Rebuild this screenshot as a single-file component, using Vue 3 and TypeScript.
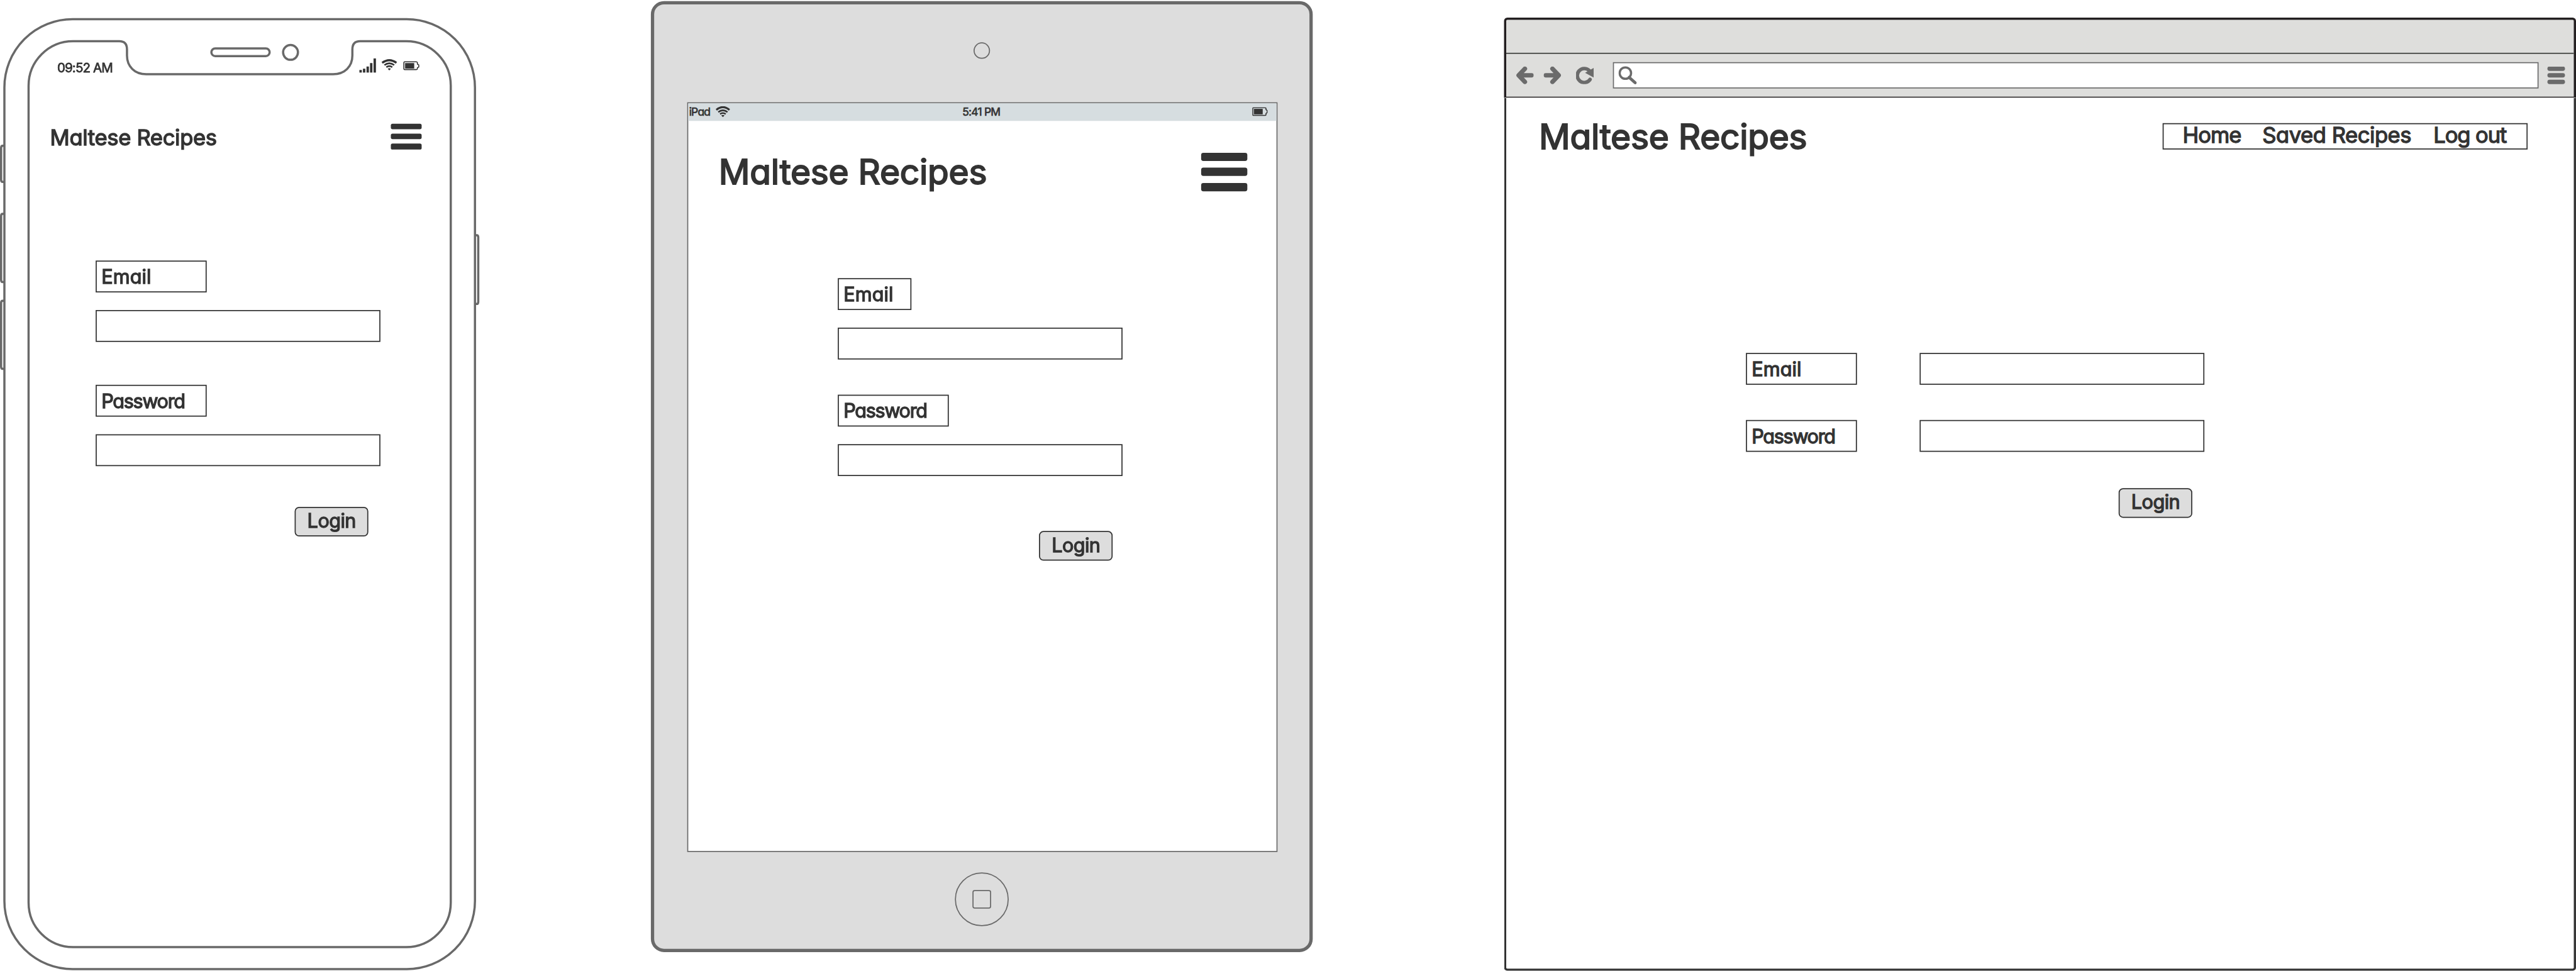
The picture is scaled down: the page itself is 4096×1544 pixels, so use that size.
<script setup lang="ts">
interface Field {
  label: string
  kind: string
}

interface NavLink {
  text: string
  kind: string
}

const brand = 'Maltese Recipes'

const fields: Field[] = [
  { label: 'Email', kind: 'email' },
  { label: 'Password', kind: 'password' },
]

const links: NavLink[] = [
  { text: 'Home', kind: 'home' },
  { text: 'Saved Recipes', kind: 'saved' },
  { text: 'Log out', kind: 'logout' },
]
</script>

<template>
  <div class="viewport">
    <main class="board">
      <!-- Phone -->
      <section class="phone">
        <svg class="phone-frame" viewBox="0 0 874 1766" width="874" height="1766">
          <g fill="#fff" stroke="#696969" stroke-width="4">
            <path d="M8 265H5Q2 265 2 269V327Q2 331 5 331H8" />
            <path d="M8 389H5Q2 389 2 393V509Q2 513 5 513H8" />
            <path d="M8 547H5Q2 547 2 551V667Q2 671 5 671H8" />
            <path d="M864 428H867Q870 428 870 432V549Q870 553 867 553H864" />
            <rect x="8" y="35" width="856" height="1728" rx="124" />
            <path
              d="M133 75H217Q231 75 231 90V101C231 121 245 135 266 135H606C627 135 641 121 641 101V90Q641 75 655 75H739A81 81 0 0 1 820 156V1642A81 81 0 0 1 739 1723H133A81 81 0 0 1 52 1642V156A81 81 0 0 1 133 75Z"
            />
            <rect x="384.5" y="88" width="106" height="14" rx="7" />
            <circle cx="528.5" cy="95.3" r="13.5" />
          </g>
        </svg>
        <div class="phone-screen">
          <div class="phone-status">
            <span class="phone-time">09:52 AM</span>
            <svg class="phone-icons" viewBox="0 0 112 28" width="112" height="28">
              <g fill="#333">
                <rect x="1.8" y="21.3" width="4.4" height="4.7" />
                <rect x="8.2" y="19" width="4.4" height="7" />
                <rect x="14.7" y="15" width="4.4" height="11" />
                <rect x="21.1" y="8.7" width="4.4" height="17.3" />
                <rect x="27.5" y="0" width="4.4" height="26" />
              </g>
              <g fill="none" stroke="#333">
                <path d="M43.2 8.3Q56.2 -1.3 69.2 8.3" stroke-width="3.8" />
                <path d="M47.3 12.4Q56.2 5.8 65.1 12.4" stroke-width="3.1" />
                <path d="M50.8 16.2Q56.2 12.4 61.6 16.2" stroke-width="3" />
              </g>
              <path d="M53.2 19Q56.2 17 59.2 19L56.2 22Z" fill="#333" />
              <path d="M84 6.4H105Q107.3 6.4 107.3 8.7V10.7L109.8 12V16L107.3 17.3V18.3Q107.3 20.6 105 20.6H84Q82.7 20.6 82.7 19.3V7.7Q82.7 6.4 84 6.4Z" fill="none" stroke="#333" stroke-width="1.8" />
              <rect x="84.9" y="8.7" width="16.6" height="10" fill="#333" />
            </svg>
          </div>
          <header class="phone-header">
            <h1 class="brand small">{{ brand }}</h1>
            <div class="burger small"><i /><i /><i /></div>
          </header>
          <form class="phone-form">
            <template v-for="f in fields" :key="f.kind">
              <label class="tag" :class="f.kind">{{ f.label }}</label>
              <div class="entry" />
            </template>
            <button class="login" type="button">Login</button>
          </form>
        </div>
      </section>

      <!-- Tablet -->
      <section class="tablet">
        <div class="lens" />
        <div class="tablet-screen">
          <div class="tablet-status">
            <div class="carrier">
              <span class="carrier-name">iPad</span>
              <svg viewBox="0 0 26 20" width="26" height="20">
                <g fill="none" stroke="#333">
                  <path d="M1 6.9Q13 -2.9 25 6.9" stroke-width="3.7" />
                  <path d="M4.6 10.900Q13 4.300 21.4 10.900" stroke-width="3" />
                  <path d="M7.9 14.500Q13 10.900 18.1 14.500" stroke-width="2.9" />
                </g>
                <path d="M10 17Q13 15.2 16 17L13 20Z" fill="#333" />
              </svg>
            </div>
            <span class="tablet-time">5:41 PM</span>
            <svg class="tablet-battery" viewBox="0 0 28 16" width="28" height="16">
              <path d="M2 .9H23Q25 .9 25 2.8V4.6L27.1 6V10L25 11.4V13.2Q25 15.1 23 15.1H2Q.9 15.1 .9 14V2Q.9 .9 2 .9Z" fill="none" stroke="#333" stroke-width="1.8" />
              <rect x="3" y="3" width="16" height="10" fill="#333" />
            </svg>
          </div>
          <header class="tablet-header">
            <h1 class="brand">{{ brand }}</h1>
            <div class="burger"><i /><i /><i /></div>
          </header>
          <form class="tablet-form">
            <template v-for="f in fields" :key="f.kind">
              <label class="tag" :class="f.kind">{{ f.label }}</label>
              <div class="entry" />
            </template>
            <button class="login" type="button">Login</button>
          </form>
        </div>
        <div class="home-button"><i /></div>
      </section>

      <!-- Desktop browser -->
      <section class="browser">
        <div class="chrome">
          <div class="titlebar" />
          <div class="toolbar">
            <svg class="back" viewBox="0 0 32 32" width="32" height="32">
              <path d="M16 4L4.500 16L16 28M5 16H28" />
            </svg>
            <svg class="forward" viewBox="0 0 32 32" width="32" height="32">
              <path d="M16 4L27.500 16L16 28M27 16H4" />
            </svg>
            <svg class="reload" viewBox="0 0 32 32" width="32" height="32">
              <path d="M24 7.500A12.700 12.700 0 1 0 25.500 23.500" />
              <path class="solid" d="M32 2.700V20L16.400 11.300Z" />
            </svg>
            <div class="address">
              <svg viewBox="0 0 34 34" width="34" height="34">
                <circle cx="12.700" cy="13" r="10.400" />
                <path d="M19.500 20.700L30.500 30.500" />
              </svg>
            </div>
            <div class="menu"><i /><i /><i /></div>
          </div>
        </div>
        <div class="page">
          <header class="page-header">
            <h1 class="brand">{{ brand }}</h1>
            <nav class="nav">
              <a v-for="l in links" :key="l.kind" :class="l.kind">{{ l.text }}</a>
            </nav>
          </header>
          <form class="page-form">
            <div v-for="f in fields" :key="f.kind" class="row">
              <label class="tag" :class="f.kind">{{ f.label }}</label>
              <div class="entry" />
            </div>
            <button class="login" type="button">Login</button>
          </form>
        </div>
      </section>
    </main>
  </div>
</template>

<style>
body {
  margin: 0;
  overflow: hidden;
  background: #fff;
}
</style>

<style scoped>
* {
  box-sizing: border-box;
}

.viewport {
  width: 4096px;
  height: 1544px;
  overflow: hidden;
}

.board {
  display: flex;
  align-items: flex-start;
  width: 4686px;
  height: 1766px;
  transform: scale(0.87409);
  transform-origin: 0 0;
  color: #333;
  font-family: Inter, 'Noto Sans', sans-serif;
  font-feature-settings: 'cv11';
  stroke-linejoin: round;
  white-space: nowrap;
}

/* shared pieces */
.brand {
  margin: 0;
  font-size: 63px;
  line-height: 80px;
  font-weight: 400;
  letter-spacing: -0.3px;
  -webkit-text-stroke: 2.2px #333;
}

.brand.small {
  font-size: 39.5px;
  line-height: 50px;
  letter-spacing: -0.35px;
  -webkit-text-stroke-width: 1.6px;
}

.burger {
  display: flex;
  flex-direction: column;
  justify-content: space-between;
  width: 84px;
  height: 70px;
}

.burger i {
  height: 15px;
  border-radius: 4px;
  background: #333;
}

.burger.small {
  width: 56px;
  height: 47px;
}

.burger.small i {
  height: 10.5px;
  border-radius: 3px;
}

.tag {
  display: block;
  width: 202px;
  height: 58px;
  padding-left: 8.5px;
  border: 2px solid #333;
  font-size: 35px;
  line-height: 54px;
  -webkit-text-stroke: 1.5px #333;
}

.tag.email {
  letter-spacing: 0.1px;
}

.tag.password {
  letter-spacing: -1.5px;
}

.entry {
  width: 518px;
  height: 58px;
  border: 2px solid #333;
  background: #fff;
}

.login {
  display: block;
  width: 134px;
  height: 54px;
  padding: 0 0 4px 21px;
  border: 2px solid #333;
  border-radius: 8px;
  background: #ddd;
  color: #333;
  font-family: inherit;
  font-feature-settings: inherit;
  font-size: 35px;
  line-height: 46px;
  letter-spacing: -0.6px;
  text-align: left;
  -webkit-text-stroke: 1.5px #333;
}

/* phone */
.phone {
  position: relative;
  width: 874px;
  height: 1766px;
  flex: none;
}

.phone-frame {
  position: absolute;
  inset: 0;
}

.phone-screen {
  position: relative;
  padding: 105px 105px 0 90px;
}

.phone-status {
  display: flex;
  justify-content: space-between;
  height: 35px;
}

.phone-time {
  padding-left: 14px;
  font-size: 23.5px;
  line-height: 35px;
  letter-spacing: -1px;
  -webkit-text-stroke: 0.9px #333;
}

.phone-icons {
  margin: 1px 5px 0 0;
}

.phone-header {
  display: flex;
  justify-content: space-between;
  margin-top: 84.5px;
  padding: 0 2px 0 1px;
}

.phone-form {
  display: flex;
  flex-direction: column;
  align-items: flex-start;
  padding: 199.5px 0 0 84px;
}

.phone-form .entry {
  margin: 32px 0 78px;
}

.phone-form .login {
  margin: -4px 0 0 362px;
}

/* tablet */
.tablet {
  display: flex;
  flex-direction: column;
  align-items: center;
  flex: none;
  width: 1204px;
  height: 1730px;
  margin: 2px 0 0 310px;
  border: 6px solid #696969;
  border-radius: 24px;
  background: #ddd;
}

.lens {
  width: 30px;
  height: 30px;
  margin-top: 69px;
  border: 2px solid #696969;
  border-radius: 50%;
}

.tablet-screen {
  width: 1074px;
  height: 1364px;
  margin: 79px 0 0 2px;
  border: 2px solid #696969;
  background: #fff;
}

.tablet-status {
  display: grid;
  grid-template-columns: 1fr auto 1fr;
  align-items: center;
  height: 32px;
  padding-bottom: 2px;
  background: #d6dde0;
  font-size: 20px;
  line-height: 30px;
  -webkit-text-stroke: 0.8px #333;
}

.carrier {
  display: flex;
  align-items: center;
  gap: 10.5px;
  padding-left: 1.5px;
}

.carrier-name {
  letter-spacing: -0.9px;
}

.tablet-time {
  margin-left: -4px;
  letter-spacing: -0.9px;
}

.tablet-battery {
  justify-self: end;
  margin-right: 16px;
}

.tablet-header {
  display: flex;
  justify-content: space-between;
  margin-top: 51.5px;
  padding: 0 53px 0 55.5px;
}

.tablet-header .burger {
  margin-top: 6px;
}

.tablet-form {
  display: flex;
  flex-direction: column;
  align-items: flex-start;
  padding: 154.5px 0 0 272px;
}

.tablet-form .tag.email {
  width: 134px;
}

.tablet-form .entry {
  margin: 32px 0 64px;
}

.tablet-form .login {
  margin: 36px 0 0 366px;
}

.home-button {
  display: flex;
  align-items: center;
  justify-content: center;
  width: 98px;
  height: 98px;
  margin-top: 37px;
  border: 2px solid #696969;
  border-radius: 50%;
}

.home-button i {
  width: 34px;
  height: 34px;
  border: 2px solid #696969;
  border-radius: 4px;
}

/* browser */
.browser {
  display: flex;
  flex-direction: column;
  flex: none;
  width: 1950px;
  height: 1734px;
  margin: 32px 0 0 348px;
}

.chrome {
  height: 146px;
  border: 4px solid #231f20;
  border-bottom-width: 2px;
  border-radius: 6px 6px 0 0;
  background: #dededc;
}

.titlebar {
  height: 62px;
  border-bottom: 2px solid #3f423e;
}

.toolbar {
  display: flex;
  align-items: center;
  height: 78px;
  padding: 2px 16px 2px 18px;
}

.toolbar svg {
  flex: none;
  fill: none;
  stroke: #6b6b6b;
  stroke-width: 8px;
  stroke-linecap: round;
}

.toolbar .forward {
  margin-left: 18px;
}

.toolbar .reload {
  margin: 0 35px 0 27px;
  stroke-width: 6.5px;
}

.toolbar .reload .solid {
  fill: #6b6b6b;
  stroke: none;
}

.address {
  flex: 1;
  height: 48px;
  padding: 5px 0 0 8px;
  border: 2px solid #6b6b6b;
  background: #fff;
}

.address svg {
  display: block;
}

.address circle {
  stroke-width: 4px;
}

.address path {
  stroke-width: 5.5px;
}

.menu {
  display: flex;
  flex-direction: column;
  gap: 4px;
  width: 32px;
  margin-left: 16px;
}

.menu i {
  height: 8px;
  border-radius: 4px;
  background: #6b6b6b;
}

.page {
  flex: 1;
  border: 4px solid #333;
  border-top: 0;
  border-radius: 0 0 6px 6px;
  background: #fff;
}

.page-header {
  display: flex;
  justify-content: space-between;
  padding: 29.5px 84px 0 59.5px;
}

.nav {
  display: flex;
  width: 664px;
  height: 48px;
  margin-top: 16.5px;
  padding-left: 34.5px;
  border: 2px solid #333;
  font-size: 39.5px;
  line-height: 41px;
  -webkit-text-stroke: 1.5px #333;
}

.nav .home {
  width: 145px;
  letter-spacing: -1.1px;
}

.nav .saved {
  width: 311px;
  letter-spacing: -0.5px;
}

.nav .logout {
  letter-spacing: -1.2px;
}

.page-form {
  padding: 354.5px 0 0 436px;
}

.row {
  display: flex;
  gap: 114px;
  margin-bottom: 64px;
}

.page-form .login {
  margin: 66px 0 0 678px;
}
</style>
